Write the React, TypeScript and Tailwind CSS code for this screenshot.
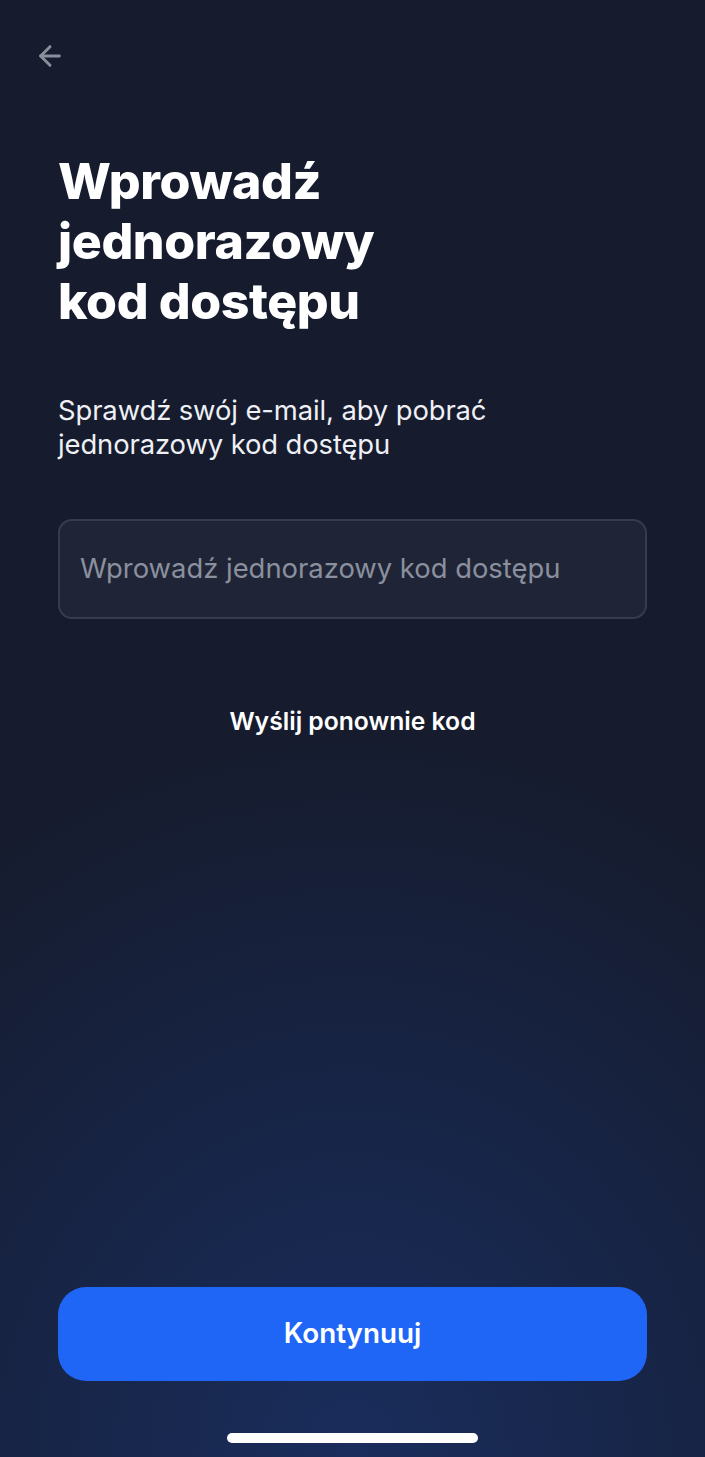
import { ArrowLeft } from 'lucide-react';

export default function App() {
    return (
        <div className="relative flex h-[1457px] w-full flex-col overflow-hidden bg-[#161c2e] font-['Inter',sans-serif] text-white">
            <div className="pointer-events-none absolute inset-0 bg-[radial-gradient(ellipse_660px_720px_at_50%_100%,#1a2d5c_0%,#172548_45%,#161c2e_100%)]" />

            <div className="relative flex flex-1 flex-col">
                <button className="ml-[34px] mt-[41px] flex h-[30px] w-[32px] items-center justify-center text-[#8a8f9d]">
                    <ArrowLeft size={32} strokeWidth={2.2} />
                </button>

                <div className="px-[58px]">
                    <h1 className="mt-[80px] text-[50px] font-extrabold leading-[60px] tracking-[-0.4px]">
                        Wprowadź<br />jednorazowy<br />kod dostępu
                    </h1>

                    <p className="mt-[62px] text-[27.4px] leading-[34px] tracking-[-0.1px] text-[#eef0f5]">
                        Sprawdź swój e-mail, aby pobrać<br />jednorazowy kod dostępu
                    </p>

                    <div className="mt-[58px] flex h-[100px] items-center rounded-[14px] border-2 border-[#353c4e] bg-[#1f2536] px-[20px]">
                        <input
                            className="w-full bg-transparent text-[27.4px] text-white outline-none placeholder:text-[#8b909e]"
                            placeholder="Wprowadź jednorazowy kod dostępu"
                        />
                    </div>

                    <button className="mt-[84px] block w-full text-center text-[24.7px] font-semibold text-white">
                        Wyślij ponownie kod
                    </button>
                </div>

                <div className="mt-auto px-[58px]">
                    <button className="flex h-[94px] w-full items-center justify-center rounded-[28px] bg-[#1f66f7] text-[27.8px] font-semibold text-white">
                        Kontynuuj
                    </button>
                </div>

                <div className="flex justify-center pb-[14px] pt-[52px]">
                    <div className="h-[10px] w-[251px] rounded-full bg-white" />
                </div>
            </div>
        </div>
    );
}
